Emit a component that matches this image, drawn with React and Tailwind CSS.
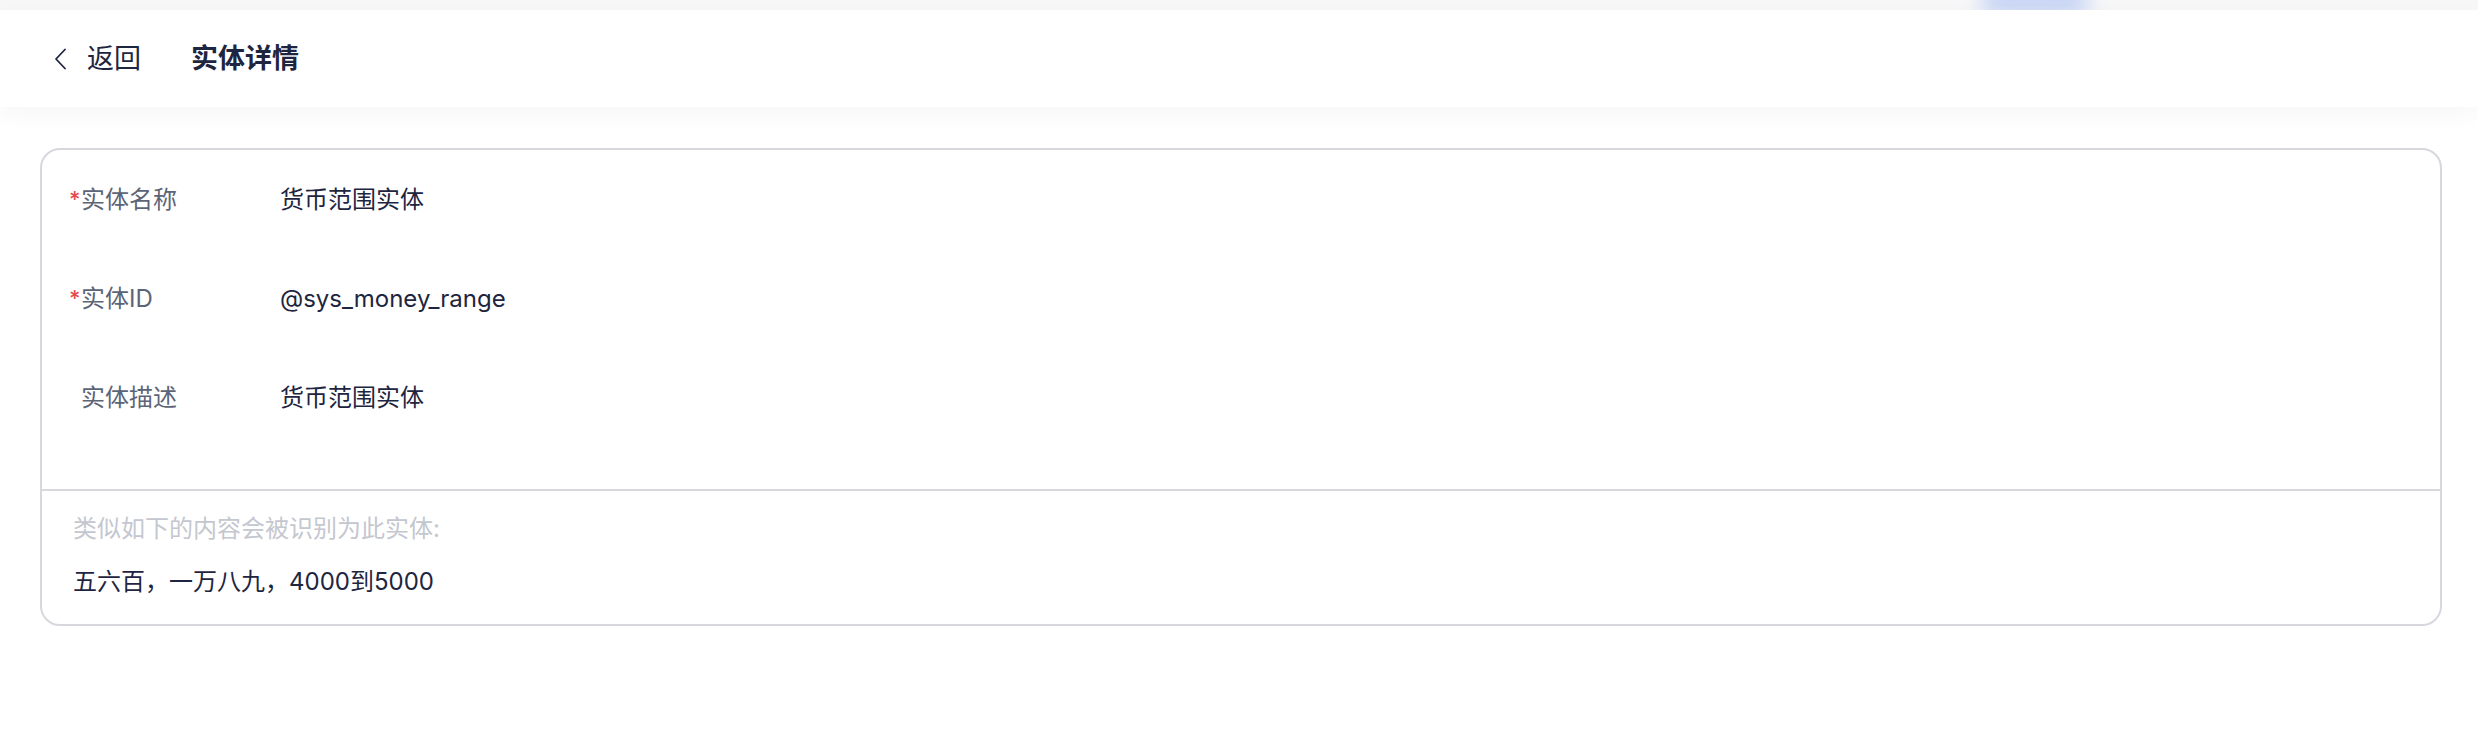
import React from 'react';

const font = { fontFamily: 'Inter, "Noto Sans CJK SC", sans-serif' };

const fields = [
  { label: '实体名称', value: '货币范围实体', required: true },
  { label: '实体ID', value: '@sys_money_range', required: true },
  { label: '实体描述', value: '货币范围实体', required: false },
];

const BackIcon = () => (
  <svg width="14" height="22" viewBox="0 0 14 22" fill="none" className="shrink-0">
    <polyline points="11,1.5 2,11 11,20.5" stroke="#1e2540" strokeWidth="1.8" strokeLinecap="round" strokeLinejoin="round" />
  </svg>
);

export default function App() {
  return (
    <div className="relative min-h-screen w-full bg-white" style={font}>
      {/* top strip */}
      <div className="relative h-[10px] bg-[#f7f7f8] overflow-visible">
        <div className="absolute left-[1980px] top-[-14px] h-[30px] w-[110px] rounded-full bg-[#b9cbf4] blur-[10px] opacity-80" />
      </div>

      {/* header */}
      <header className="relative z-10 flex h-[97px] items-center bg-white pl-[54px] shadow-[0_8px_22px_rgba(0,0,0,0.035)]">
        <button className="flex items-center gap-[19px] text-[27px] leading-none text-[#1e2540]">
          <BackIcon />
          <span>返回</span>
        </button>
        <h1 className="ml-[50px] text-[27px] font-semibold leading-none text-[#1e2540]">实体详情</h1>
      </header>

      {/* content */}
      <main className="pl-[40px] pr-[36px] pt-[41px]">
        <div className="rounded-[20px] border-2 border-[#d6d8de] bg-white">
          <div className="pb-[42px]">
            {fields.map((f) => (
              <div key={f.label} className="flex h-[99px] items-center text-[24px]">
                <div className="flex w-[238px] shrink-0 items-center pl-[27px]">
                  <span className={`w-[12px] text-[22px] font-medium text-[#e5484d] ${f.required ? '' : 'invisible'}`}>*</span>
                  <span className="text-[#5c6478]">{f.label}</span>
                </div>
                <div className="text-[#1e2540]">{f.value}</div>
              </div>
            ))}
          </div>
          <div className="border-t-2 border-[#d6d8de] pl-[31px] pb-[27px] pt-[23px]">
            <div className="h-[30px] text-[24px] leading-[30px] text-[#c4c7cf]">类似如下的内容会被识别为此实体:</div>
            <div className="mt-[23px] h-[30px] text-[24px] leading-[30px] text-[#1e2540]">五六百，一万八九，4000到5000</div>
          </div>
        </div>
      </main>
    </div>
  );
}
